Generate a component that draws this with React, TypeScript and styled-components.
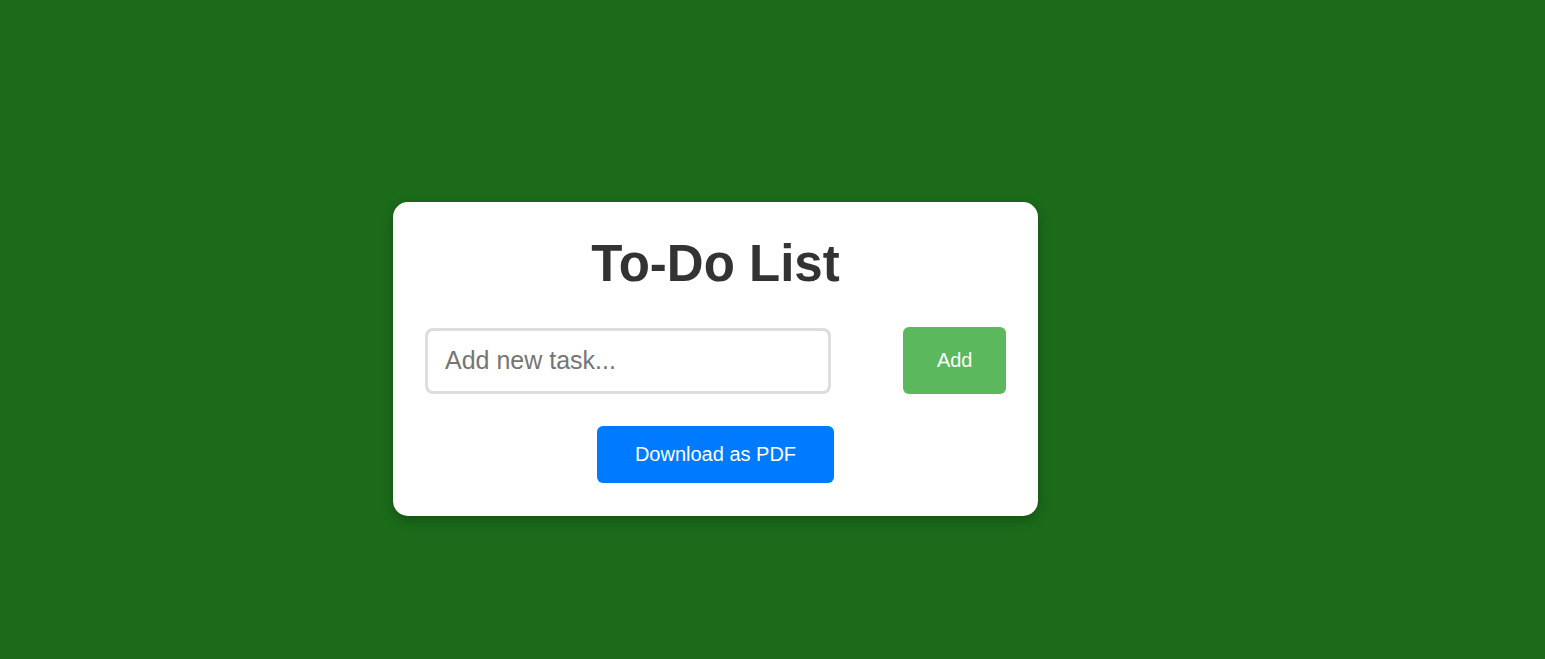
import { useState } from "react";
import styled, { createGlobalStyle } from "styled-components";

const GlobalStyle = createGlobalStyle`
  html, body {
    margin: 0;
    padding: 0;
    background-color: #1b6b1b;
    font-family: "Liberation Sans", Arial, sans-serif;
  }
`;

export default function App() {
  const [task, setTask] = useState("");
  const [tasks, setTasks] = useState<string[]>([]);

  const addTask = () => {
    if (!task.trim()) return;
    setTasks([...tasks, task.trim()]);
    setTask("");
  };

  return (
    <>
      <GlobalStyle />
      <Page>
        <Card>
          <Title>To-Do List</Title>

          <InputRow>
            <TaskInput
              type="text"
              placeholder="Add new task..."
              value={task}
              onChange={(e) => setTask(e.target.value)}
            />
            <Button $color="#5cb85c" $padY={22} $padX={33.5} onClick={addTask}>
              Add
            </Button>
          </InputRow>

          {tasks.length > 0 && (
            <TaskList>
              {tasks.map((t, i) => (
                <li key={i}>{t}</li>
              ))}
            </TaskList>
          )}

          <Actions>
            <Button $color="#007bff" $padY={17} $padX={38}>
              Download as PDF
            </Button>
          </Actions>
        </Card>
      </Page>
    </>
  );
}

const Page = styled.div`
  min-height: 100vh;
  box-sizing: border-box;
  display: flex;
  align-items: flex-start;
  padding: 202px 0 0 393px;
`;

const Card = styled.div`
  width: 645px;
  box-sizing: border-box;
  background-color: #fff;
  border-radius: 15px;
  padding: 32px 32px 33px;
  box-shadow: 0 4px 12px rgba(0, 0, 0, 0.25);
`;

const Title = styled.h1`
  margin: 0 0 34px 0;
  text-align: center;
  font-size: 51px;
  font-weight: 700;
  color: #333;
`;

const InputRow = styled.div`
  display: flex;
  justify-content: space-between;
  align-items: center;
`;

const TaskInput = styled.input`
  width: 406px;
  height: 66px;
  box-sizing: border-box;
  padding: 0 17px;
  border: 3px solid #ddd;
  border-radius: 8px;
  font-family: "Liberation Sans", Arial, sans-serif;
  font-size: 25px;
  color: #333;
  outline: none;

  &::placeholder {
    color: #757575;
  }
`;

const Button = styled.button<{ $color: string; $padY: number; $padX: number }>`
  background-color: ${(p) => p.$color};
  color: #fff;
  border: none;
  border-radius: 6px;
  padding: ${(p) => p.$padY}px ${(p) => p.$padX}px;
  font-family: "Liberation Sans", Arial, sans-serif;
  font-size: 20px;
  line-height: 23px;
  cursor: pointer;
`;

const TaskList = styled.ul`
  list-style: none;
  padding: 0;
  margin: 20px 0 0 0;

  li {
    padding: 10px 0;
    border-bottom: 1px solid #eee;
    color: #333;
  }
`;

const Actions = styled.div`
  display: flex;
  justify-content: center;
  margin-top: 32px;
`;
